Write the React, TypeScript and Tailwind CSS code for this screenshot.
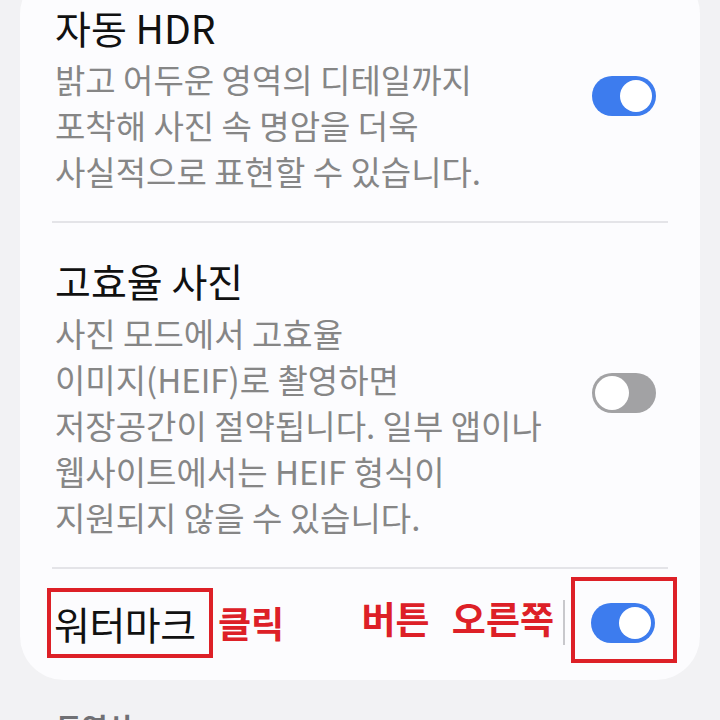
import React from 'react';

const FONT = "font-['Noto_Sans_CJK_KR','Noto_Sans',sans-serif]";

const Toggle = ({ on }: { on: boolean }) => (
  <div
    className={
      on
        ? 'w-[64px] h-[40px] rounded-full bg-[#3d7cee] p-[4px] flex justify-end items-center shrink-0'
        : 'w-[64px] h-[40px] rounded-full bg-[#a2a2a4] p-[3px] flex justify-start items-center shrink-0'
    }
  >
    <div className={on ? 'w-[32px] h-[32px] rounded-full bg-white' : 'w-[34px] h-[34px] rounded-full bg-white'} />
  </div>
);

const Divider = () => <div className="mx-[32px] h-[2px] bg-[#e4e4e8]" />;

export default function App() {
  return (
    <div className={`w-[720px] h-[720px] overflow-hidden bg-[#f2f2f4] ${FONT}`}>
      {/* Settings card */}
      <div className="mx-[20px] -mt-[30px] pt-[34px] rounded-[44px] bg-[#fcfcfe]">
        {/* 자동 HDR */}
        <div className="flex items-start pl-[35px] pr-[44px] pb-[27px]">
          <div className="flex-1 whitespace-nowrap">
            <div className="text-[39px] leading-[46px] text-[#111]">자동 HDR</div>
            <div className="mt-[6px] text-[33px] leading-[46px] text-[#868686]">
              밝고 어두운 영역의 디테일까지
              <br />
              포착해 사진 속 명암을 더욱
              <br />
              사실적으로 표현할 수 있습니다.
            </div>
          </div>
          <div className="mt-[72px]">
            <Toggle on />
          </div>
        </div>
        <Divider />

        {/* 고효율 사진 */}
        <div className="flex items-start pl-[35px] pr-[44px] pt-[34px] pb-[27px]">
          <div className="flex-1 whitespace-nowrap">
            <div className="text-[39px] leading-[46px] text-[#111]">고효율 사진</div>
            <div className="mt-[7px] text-[33px] leading-[46px] text-[#868686]">
              사진 모드에서 고효율
              <br />
              이미지(HEIF)로 촬영하면
              <br />
              저장공간이 절약됩니다. 일부 앱이나
              <br />
              웹사이트에서는 HEIF 형식이
              <br />
              지원되지 않을 수 있습니다.
            </div>
          </div>
          <div className="mt-[116px]">
            <Toggle on={false} />
          </div>
        </div>
        <Divider />

        {/* 워터마크 (annotated) */}
        <div className="h-[111px] flex items-start pl-[27px] pr-[23px] whitespace-nowrap">
          <div className="w-[166px] mt-[19px] border-[4px] border-[#dd2027] pl-[3px] py-[8px] text-[39px] leading-[46px] text-[#111] tracking-[-0.5px]">
            워터마크
          </div>
          <div className="ml-[5px] mt-[31px] text-[36px] leading-[44px] font-bold text-[#dd2027]">클릭</div>
          <div className="flex-1" />
          <div className="mt-[27px] text-[37px] leading-[44px] font-bold text-[#dd2027] [word-spacing:14px]">
            버튼 오른쪽
          </div>
          <div className="ml-[9px] mt-[31px] w-[2px] h-[45px] bg-[#c8c8cc]" />
          <div className="ml-[6px] mt-[8px] border-[4px] border-[#dd2027] pl-[16px] pr-[18px] pt-[22px] pb-[16px]">
            <Toggle on />
          </div>
        </div>
      </div>

      <div className="pl-[56px] mt-[27px] text-[28px] leading-[40px] font-bold text-[#707074]">동영상</div>
    </div>
  );
}
